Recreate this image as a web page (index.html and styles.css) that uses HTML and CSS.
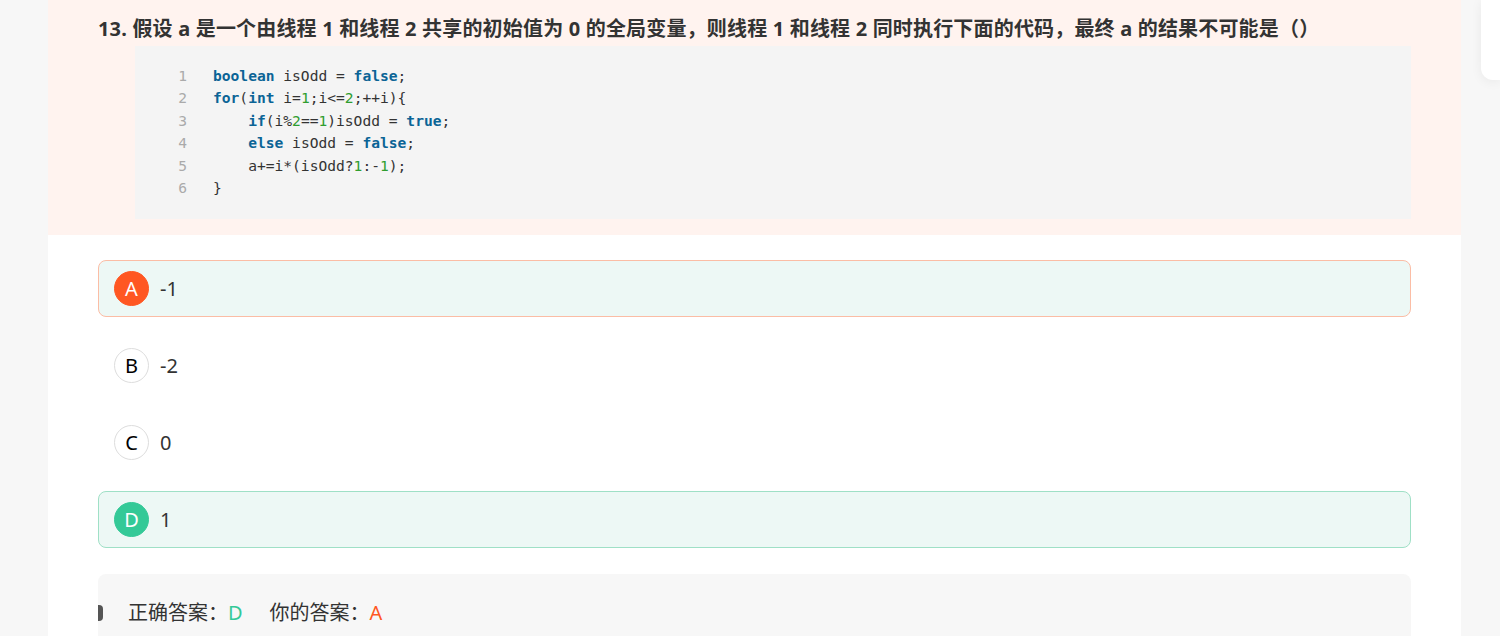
FILE: index.html
```html
<!DOCTYPE html>
<html lang="zh-CN">
<head>
    <meta charset="UTF-8">
    <meta name="viewport" content="width=device-width, initial-scale=1.0">
    <title>答题解析</title>
    <link rel="stylesheet" href="styles.css">
</head>
<body>

<div class="paper">
    <div class="question">
        <h3 class="question-title">13. 假设 a 是一个由线程 1 和线程 2 共享的初始值为 0 的全局变量，则线程 1 和线程 2 同时执行下面的代码，最终 a 的结果不可能是（）</h3>
        <div class="code-block">
            <div class="code-line"><span class="ln">1</span><span class="code"><b class="kw">boolean</b> isOdd = <b class="kw">false</b>;</span></div>
            <div class="code-line"><span class="ln">2</span><span class="code"><b class="kw">for</b>(<b class="kw">int</b> i=<i class="num">1</i>;i&lt;=<i class="num">2</i>;++i){</span></div>
            <div class="code-line"><span class="ln">3</span><span class="code">    <b class="kw">if</b>(i%<i class="num">2</i>==<i class="num">1</i>)isOdd = <b class="kw">true</b>;</span></div>
            <div class="code-line"><span class="ln">4</span><span class="code">    <b class="kw">else</b> isOdd = <b class="kw">false</b>;</span></div>
            <div class="code-line"><span class="ln">5</span><span class="code">    a+=i*(isOdd?<i class="num">1</i>:-<i class="num">1</i>);</span></div>
            <div class="code-line"><span class="ln">6</span><span class="code">}</span></div>
        </div>
    </div>

    <div class="options">
        <div class="option wrong">
            <span class="badge">A</span>
            <span class="option-text">-1</span>
        </div>
        <div class="option">
            <span class="badge">B</span>
            <span class="option-text">-2</span>
        </div>
        <div class="option">
            <span class="badge">C</span>
            <span class="option-text">0</span>
        </div>
        <div class="option right">
            <span class="badge">D</span>
            <span class="option-text">1</span>
        </div>

        <div class="answer">
            <span>正确答案：<em class="green">D</em></span>
            <span>你的答案：<em class="red">A</em></span>
        </div>
    </div>
</div>

<div class="side-card"></div>

</body>
</html>
```

FILE: styles.css
```css
html, body {
    height: 100%;
}
body {
    margin: 0;
    background: #f7f7f7;
    font-family: "Noto Sans", "Noto Sans CJK SC", sans-serif;
    color: #333;
    overflow: hidden;
}
.paper {
    width: 1413px;
    margin-left: 48px;
    min-height: 100%;
    background: #fff;
}

/* question stem */
.question {
    background: #fff3ef;
    padding: 15px 50px 16px;
}
.question-title {
    margin: 0 0 3px;
    font-size: 20px;
    line-height: 28px;
    font-weight: bold;
    letter-spacing: 0.18px;
    color: #333;
}
.code-block {
    margin-left: 37px;
    background: #f4f4f4;
    padding: 19px 0 20px;
    font-family: "DejaVu Sans Mono", "Liberation Mono", monospace;
    font-size: 14.6px;
    line-height: 22.4px;
    color: #333;
}
.code-line {
    display: flex;
}
.ln {
    width: 52px;
    text-align: right;
    color: #aaa;
    flex-shrink: 0;
}
.code {
    margin-left: 26px;
    white-space: pre;
}
.kw {
    color: #0b6496;
    font-weight: bold;
}
.num {
    color: #2f9d2f;
    font-style: normal;
}

/* options */
.options {
    padding: 25px 50px 0;
}
.option {
    display: flex;
    align-items: center;
    height: 55px;
    padding: 0 15px;
    border: 1px solid transparent;
    border-radius: 8px;
    margin-bottom: 20px;
}
.option.wrong {
    background: #edf8f5;
    border-color: #fbbda5;
}
.option.right {
    background: #edf8f5;
    border-color: #9fe0c6;
}
.badge {
    width: 33px;
    height: 33px;
    border: 1px solid #ddd;
    border-radius: 50%;
    background: #fff;
    color: #000;
    font-size: 20px;
    display: flex;
    align-items: center;
    justify-content: center;
    flex-shrink: 0;
}
.wrong .badge {
    background: #ff5722;
    border-color: #ff5722;
    color: #fff;
}
.right .badge {
    background: #34c997;
    border-color: #34c997;
    color: #fff;
}
.option-text {
    margin-left: 11px;
    font-size: 20px;
}

/* answer summary */
.answer {
    margin-top: 26px;
    background: #f7f7f7;
    border-radius: 8px;
    padding: 27px 0 40px;
    display: flex;
    align-items: center;
    gap: 27px;
    font-size: 20px;
    line-height: 24px;
}
.answer::before {
    content: "";
    width: 5px;
    height: 16px;
    background: #555;
    border-radius: 0 4px 4px 0;
    margin-right: -2px;
}
.answer em {
    font-style: normal;
}
.green {
    color: #34c997;
}
.red {
    color: #ff5722;
}

/* floating side panel */
.side-card {
    position: absolute;
    top: 0;
    left: 1481px;
    right: 0;
    height: 80px;
    background: #fff;
    border-radius: 0 0 0 12px;
    box-shadow: 0 2px 12px rgba(0, 0, 0, 0.06);
}
```
